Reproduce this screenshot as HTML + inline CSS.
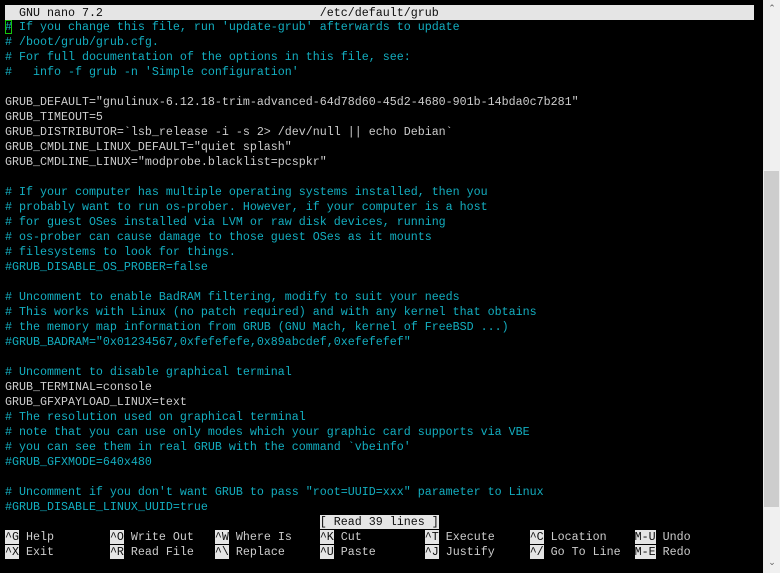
<!DOCTYPE html>
<html><head><meta charset="utf-8"><style>
html,body{margin:0;padding:0;background:#000;width:780px;height:573px;overflow:hidden}
.t{position:absolute;left:5px;top:6px;font-family:"Liberation Mono",monospace;font-size:11.67px;line-height:15px;color:#cccccc;white-space:pre;margin:0}
.r{height:15px}
.c{color:#13aec0}
.title{background:#e5e5e5;color:#0c0c0c;width:749px;margin-top:-1px;padding-top:1px;height:14px}
.k{background:#e5e5e5;color:#0c0c0c}
.cur{outline:1px solid #16c60c;outline-offset:-1px}
.sb{position:absolute;left:763px;top:0;width:17px;height:573px;background:#f0f0f0}
.th{position:absolute;left:764px;top:171px;width:15px;height:336px;background:#cdcdcd}
.ar{position:absolute;left:766px;width:12px;height:8px;color:#606060;font:9px "DejaVu Sans",sans-serif;text-align:center}
</style></head><body>
<pre class="t"><div class="r title">  GNU nano 7.2                               /etc/default/grub</div><div class="r c"><span class="cur">#</span> If you change this file, run 'update-grub' afterwards to update</div><div class="r c"># /boot/grub/grub.cfg.</div><div class="r c"># For full documentation of the options in this file, see:</div><div class="r c">#   info -f grub -n 'Simple configuration'</div><div class="r"></div><div class="r">GRUB_DEFAULT="gnulinux-6.12.18-trim-advanced-64d78d60-45d2-4680-901b-14bda0c7b281"</div><div class="r">GRUB_TIMEOUT=5</div><div class="r">GRUB_DISTRIBUTOR=`lsb_release -i -s 2&gt; /dev/null || echo Debian`</div><div class="r">GRUB_CMDLINE_LINUX_DEFAULT="quiet splash"</div><div class="r">GRUB_CMDLINE_LINUX="modprobe.blacklist=pcspkr"</div><div class="r"></div><div class="r c"># If your computer has multiple operating systems installed, then you</div><div class="r c"># probably want to run os-prober. However, if your computer is a host</div><div class="r c"># for guest OSes installed via LVM or raw disk devices, running</div><div class="r c"># os-prober can cause damage to those guest OSes as it mounts</div><div class="r c"># filesystems to look for things.</div><div class="r c">#GRUB_DISABLE_OS_PROBER=false</div><div class="r"></div><div class="r c"># Uncomment to enable BadRAM filtering, modify to suit your needs</div><div class="r c"># This works with Linux (no patch required) and with any kernel that obtains</div><div class="r c"># the memory map information from GRUB (GNU Mach, kernel of FreeBSD ...)</div><div class="r c">#GRUB_BADRAM="0x01234567,0xfefefefe,0x89abcdef,0xefefefef"</div><div class="r"></div><div class="r c"># Uncomment to disable graphical terminal</div><div class="r">GRUB_TERMINAL=console</div><div class="r">GRUB_GFXPAYLOAD_LINUX=text</div><div class="r c"># The resolution used on graphical terminal</div><div class="r c"># note that you can use only modes which your graphic card supports via VBE</div><div class="r c"># you can see them in real GRUB with the command `vbeinfo'</div><div class="r c">#GRUB_GFXMODE=640x480</div><div class="r"></div><div class="r c"># Uncomment if you don't want GRUB to pass "root=UUID=xxx" parameter to Linux</div><div class="r c">#GRUB_DISABLE_LINUX_UUID=true</div><div class="r">                                             <span class="k">[ Read 39 lines ]</span></div><div class="r"><span class="k">^G</span> Help        <span class="k">^O</span> Write Out   <span class="k">^W</span> Where Is    <span class="k">^K</span> Cut         <span class="k">^T</span> Execute     <span class="k">^C</span> Location    <span class="k">M-U</span> Undo</div><div class="r"><span class="k">^X</span> Exit        <span class="k">^R</span> Read File   <span class="k">^\</span> Replace     <span class="k">^U</span> Paste       <span class="k">^J</span> Justify     <span class="k">^/</span> Go To Line  <span class="k">M-E</span> Redo</div></pre>
<div class="sb"></div><div class="th"></div>
<div class="ar" style="top:4px">&#8963;</div>
<div class="ar" style="top:558px">&#8964;</div>
</body></html>
